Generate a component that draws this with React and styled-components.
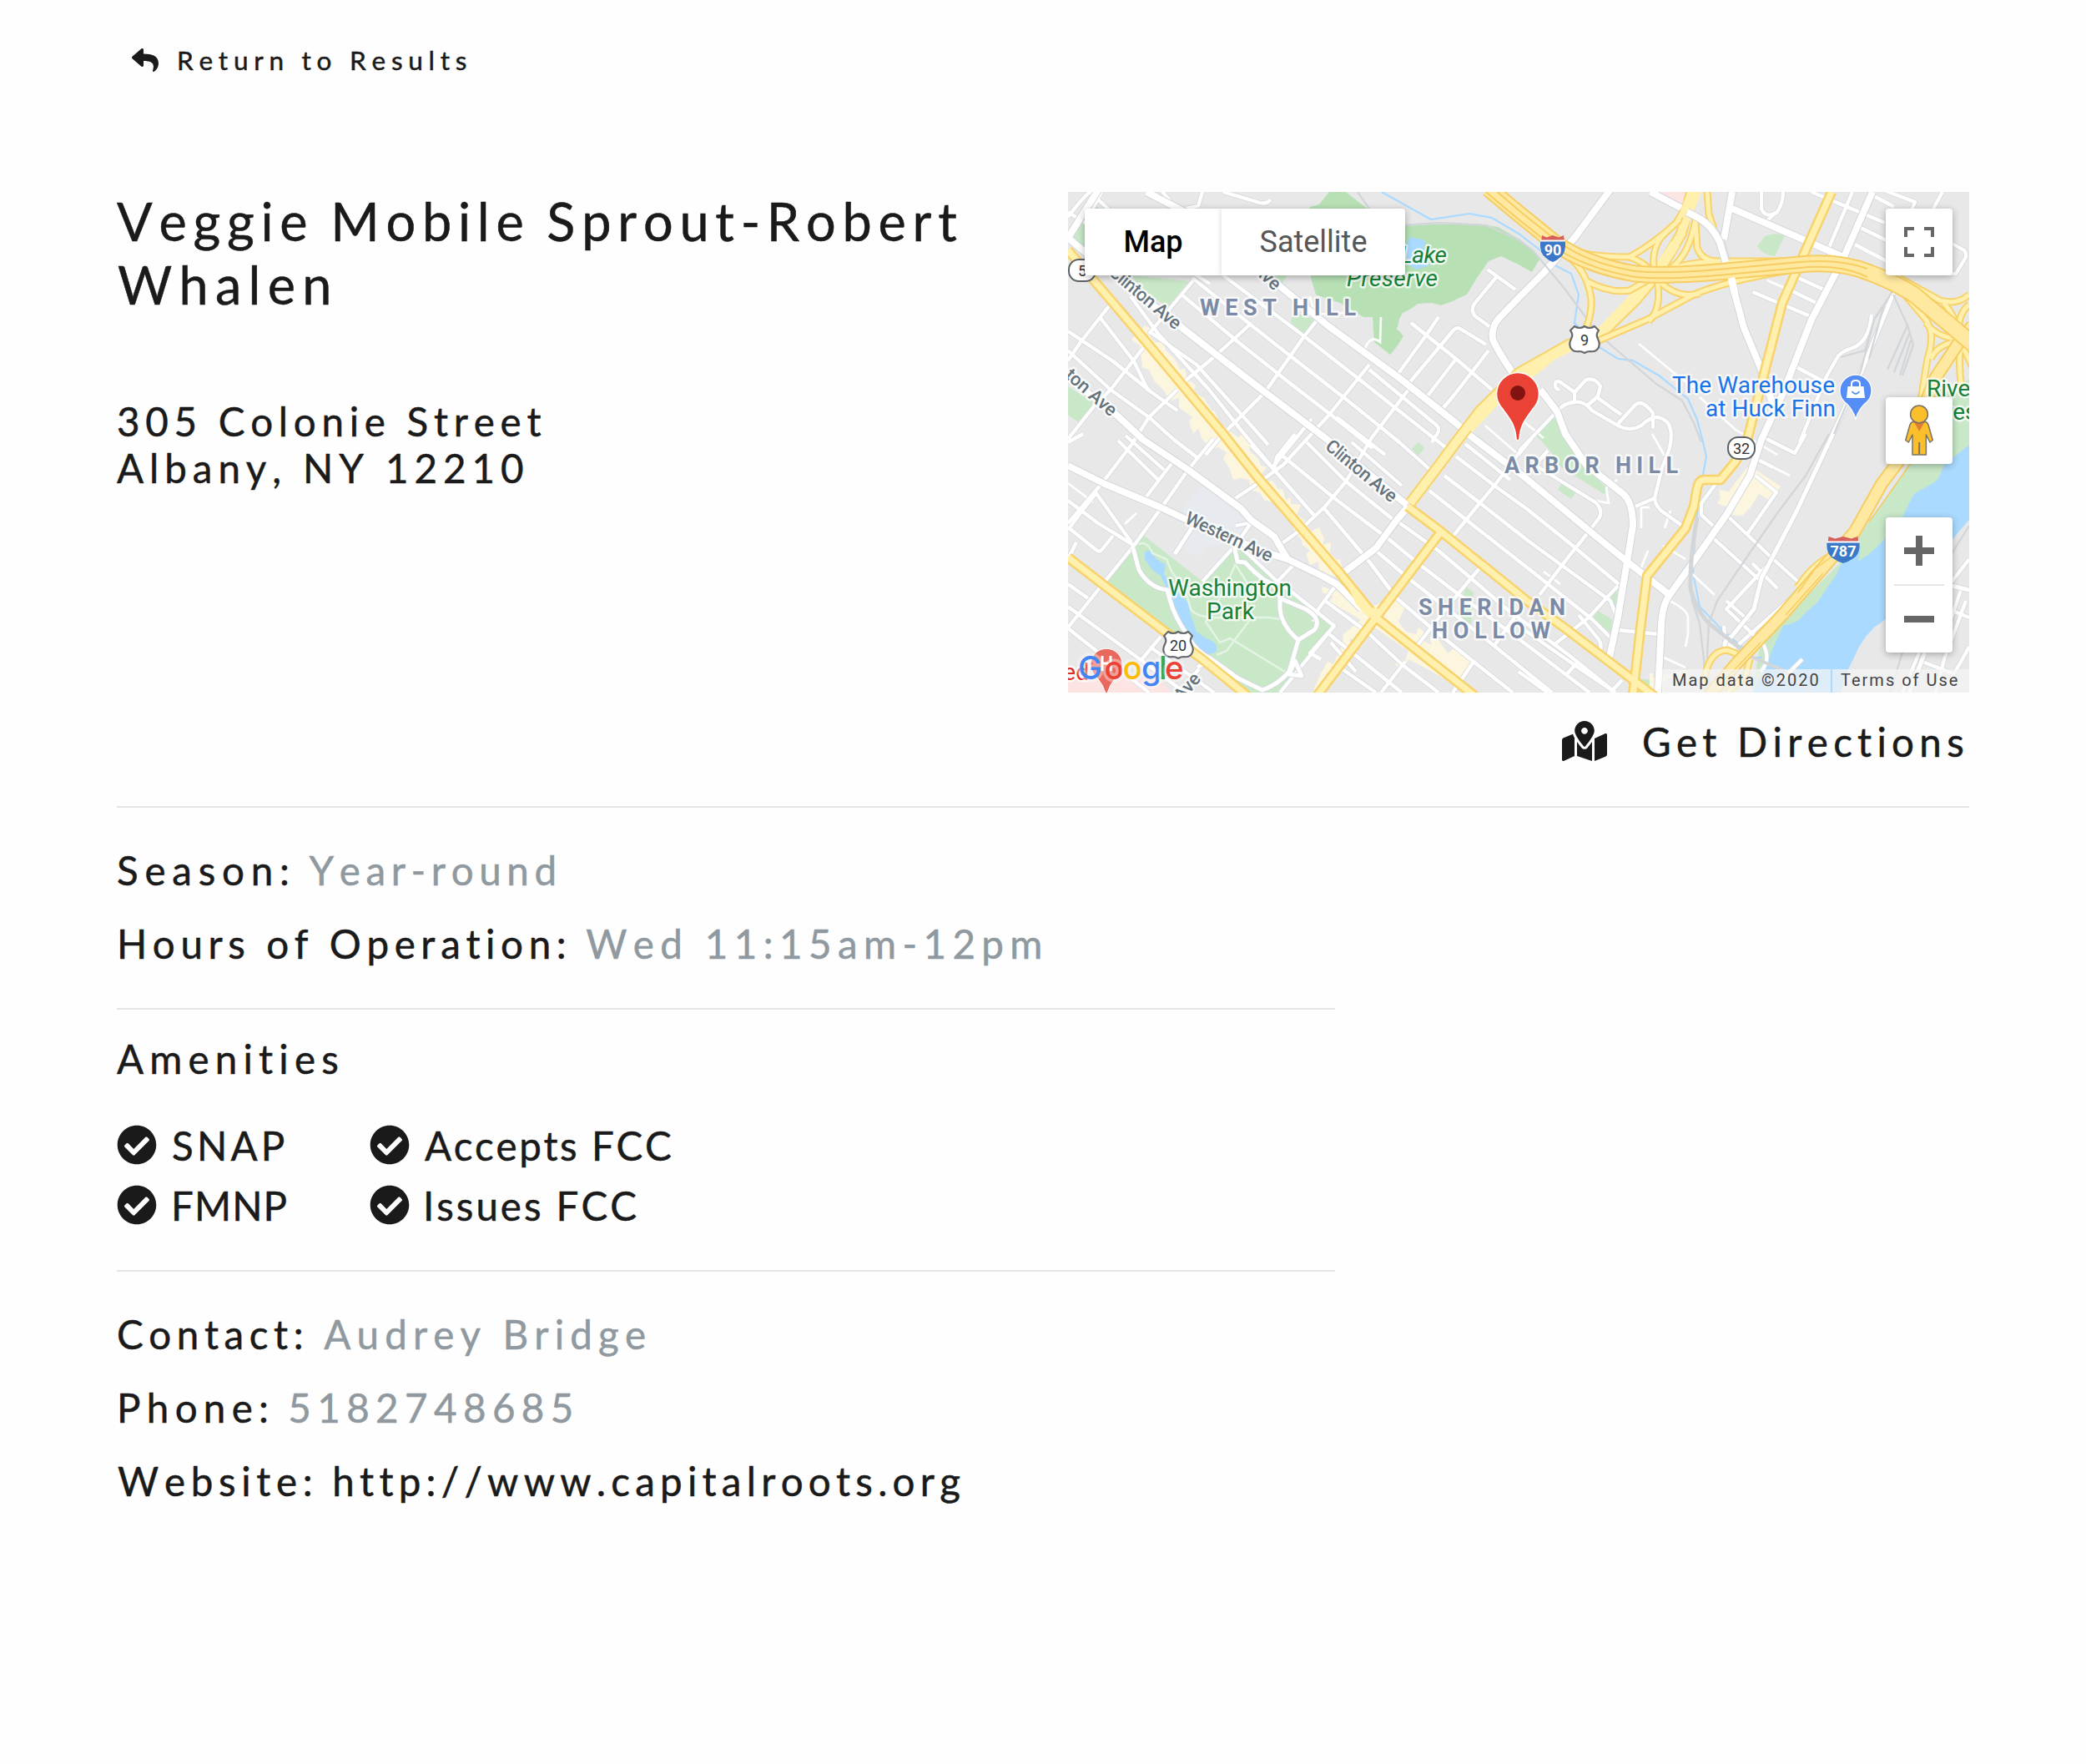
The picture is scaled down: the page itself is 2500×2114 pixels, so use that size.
import React from "react";
import styled, { createGlobalStyle } from "styled-components";
import { FaReply, FaMapMarkedAlt, FaCheckCircle } from "react-icons/fa";

const GlobalStyle = createGlobalStyle`
  * { box-sizing: border-box; }
  body {
    margin: 0;
    background: #fefefe;
    color: #1a1a1a;
    font-family: Lato, "Open Sans", sans-serif;
    font-kerning: none;
  }
`;

const Page = styled.main`
  min-height: 2114px;
  padding: 52px 140px 0;
  background: #fefefe;
  -webkit-text-stroke: 0.5px;
`;

const ReturnLink = styled.a`
  display: flex;
  align-items: center;
  width: max-content;
  height: 40px;
  margin-left: 18px;
  gap: 22px;
  font-size: 31.5px;
  line-height: 40px;
  letter-spacing: 6.75px;
  svg { width: 32px; height: 32px; }
`;

const Overview = styled.section`
  display: flex;
  justify-content: space-between;
  margin-top: 134px;
`;

const Place = styled.div`
  display: flex;
  flex-direction: column;
  gap: 98px;
  padding-top: 1px;
`;

const Title = styled.h1`
  margin: 0;
  font-size: 63px;
  line-height: 76px;
  font-weight: 400;
`;

const Address = styled.address`
  font-style: normal;
  font-size: 47.5px;
  line-height: 56px;
`;

const Line = styled.span`
  display: block;
  white-space: nowrap;
  padding-left: ${(p) => p.$indent || 0}px;
  letter-spacing: ${(p) => p.$track}px;
  word-spacing: ${(p) => p.$word || 0}px;
`;

const MapColumn = styled.div`
  display: flex;
  flex-direction: column;
  align-items: flex-end;
  padding-top: 4px;
`;

const Directions = styled.a`
  display: flex;
  align-items: center;
  height: 56px;
  margin-top: 30px;
  gap: 42px;
  font-size: 47.5px;
  line-height: 56px;
  letter-spacing: 6.29px;
  white-space: nowrap;
  svg { width: 54px; height: 48px; }
`;

const DirectionsText = styled.span`
  padding-top: 1px;
`;

const Rule = styled.hr`
  width: ${(p) => (p.$short ? "1460px" : "100%")};
  height: 2px;
  margin: ${(p) => p.$top}px 0 ${(p) => p.$bottom}px;
  border: 0;
  background: #e5e5e5;
`;

const Facts = styled.dl`
  display: flex;
  flex-direction: column;
  gap: 32px;
  margin: 0;
`;

const Fact = styled.div`
  display: flex;
  padding-left: ${(p) => p.$indent || 0}px;
  gap: ${(p) => p.$gap}px;
  font-size: 47.5px;
  line-height: 56px;
  white-space: nowrap;
`;

const Term = styled.dt`
  letter-spacing: ${(p) => p.$track}px;
`;

const Value = styled.dd`
  margin: 0;
  color: ${(p) => (p.$link ? "#1a1a1a" : "#8f999f")};
  letter-spacing: ${(p) => p.$track}px;
`;

const Heading = styled.h2`
  margin: 0;
  font-size: 47.5px;
  line-height: 56px;
  font-weight: 400;
  letter-spacing: 7.18px;
`;

const Amenities = styled.ul`
  display: grid;
  grid-template-columns: 303px max-content;
  grid-auto-rows: 72px;
  margin: 39px 0 0;
  padding: 0;
  list-style: none;
`;

const Amenity = styled.li`
  display: flex;
  align-items: center;
  gap: ${(p) => p.$gap}px;
  font-size: 47.5px;
  line-height: 72px;
  letter-spacing: ${(p) => p.$track}px;
  svg { width: 48px; height: 48px; }
`;

const AmenityName = styled.span`
  padding-top: 2px;
`;

/* ---------- map widget ---------- */

const MapFrame = styled.div`
  position: relative;
  width: 1080px;
  height: 600px;
  overflow: hidden;
  background: #e8e8e8;
  font-family: Roboto, sans-serif;
  font-kerning: normal;
  -webkit-text-stroke: 0;
`;

const MapArt = styled.svg`
  display: block;
  width: 1080px;
  height: 600px;
  font-family: Roboto, sans-serif;
`;

const Overlay = styled.div`
  position: absolute;
  inset: 0;
  display: flex;
  justify-content: space-between;
`;

const TypeSwitch = styled.div`
  display: flex;
  height: 80px;
  margin: 20px;
  border-radius: 4px;
  box-shadow: 0 2px 8px rgba(0, 0, 0, 0.3);
`;

const TypeButton = styled.button`
  width: ${(p) => (p.$active ? 164 : 220)}px;
  padding: 0;
  border: 0;
  border-radius: ${(p) => (p.$active ? "4px 0 0 4px" : "0 4px 4px 0")};
  background: #fff;
  box-shadow: ${(p) => (p.$active ? "none" : "-1px 0 6px rgba(0,0,0,.13)")};
  clip-path: ${(p) => (p.$active ? "none" : "inset(0 0 0 -8px)")};
  color: ${(p) => (p.$active ? "#000" : "#565656")};
  font: ${(p) => (p.$active ? 500 : 400)} 36px/80px Roboto, sans-serif;
`;

const Controls = styled.div`
  display: flex;
  flex-direction: column;
  width: 80px;
  margin: 20px;
`;

const ControlBox = styled.button`
  display: flex;
  align-items: center;
  justify-content: center;
  width: 80px;
  height: 80px;
  margin: 0 0 ${(p) => p.$after}px;
  padding: 0;
  border: 0;
  border-radius: 4px;
  background: #fff;
  box-shadow: 0 2px 8px rgba(0, 0, 0, 0.3);
`;

const ZoomBox = styled.div`
  display: flex;
  flex-direction: column;
  align-items: center;
  width: 80px;
  height: 162px;
  border-radius: 4px;
  background: #fff;
  box-shadow: 0 2px 8px rgba(0, 0, 0, 0.3);
`;

const ZoomButton = styled.button`
  display: flex;
  align-items: center;
  justify-content: center;
  width: 80px;
  height: 80px;
  padding: 0;
  border: 0;
  background: transparent;
`;

const ZoomLine = styled.div`
  width: 60px;
  height: 2px;
  background: #e6e6e6;
`;

const Credits = styled.div`
  position: absolute;
  right: 0;
  bottom: 0;
  display: flex;
  gap: 2px;
  height: 28px;
`;

const Credit = styled.span`
  width: ${(p) => p.$width}px;
  padding-left: ${(p) => p.$pad}px;
  background: rgba(245, 245, 245, 0.7);
  color: #444;
  font-size: 20px;
  line-height: 27px;
  letter-spacing: ${(p) => p.$track}px;
  white-space: nowrap;
`;

const parks = [
  "M290 18L301 15 313 0H333L361 22 383 38 404 41 436 39 490 38 515 42 540 56 566 79 556 96 540 87 519 77 504 83 490 103 478 123 458 132 447 136 436 133 419 134 411 140 401 145 397 152 395 162 393 164 398 168 402 173 395 184 386 195 367 180 365 150H354L326 133 310 128 297 123 291 103Z",
];

const greens = [
  "M29 15L42 22 20 70 4 53Z",
  "M76 100L145 107 119 138 86 115Z",
  "M242 100H263L252 116Z",
  "M270 143L295 153 283 170 267 157Z",
  "M0 233L31 253 15 278 0 267Z",
  "M90 411L161 467 201 423 317 518 290 553 254 600H213L176 567 147 547 111 523 44 468 78 427Z",
  "M420 300L427 307 420 316 412 308Z",
  "M477 473L486 480 483 520 465 510Z",
  "M582 270L561 292 576 308 591 330 615 345 642 362 648 357 625 335 603 305Z",
  "M593 347L610 358 603 368 587 357Z",
  "M659 472L656 500 643 488Z",
  "M635 502L652 512 650 528 628 512Z",
  "M835 53Q846 48 859 52L847 77Q832 75 826 65Z",
  "M683 583L702 585V600H670Z",
  "M1080 225L1036 240 1007 327 925 445 830 540 820 600H850L960 450 1080 303Z",
];

const waters = [
  "M1080 303L1050 327 1046 337 1042 345 1035 350 1014 362 1007 375 1000 390 978 417 960 434 947 443 950 424 926 447 920 460 908 477 898 492 885 503 876 513 868 517 857 520 842 553 835 573 820 600H926L931 580 940 562 947 547 956 533 966 522 980 512 1010 477 1059 417 1080 393Z",
  "M92 432Q95 428 99 431L106 440 117 447 115 458 124 473 136 483 144 493 147 507 154 527 165 535Q180 539 178 550 174 555 165 553L152 543 140 523 129 503 122 483 111 460 101 453 92 440Z",
  "M403 67L410 54 428 58 426 66 433 88 418 93 407 87Z",
];

const shops = [
  "M92 160L101 165 98 174 106 181 113 178 117 190 128 200 134 213 140 212 143 224 153 232 150 240 163 247 172 262 176 263 182 279 186 280 198 290 204 294 209 290 219 303 217 310 228 320 231 328 238 330 230 340 240 347 245 346 252 357 257 356 261 369 267 366 267 374 279 375 274 387 286 395 290 407 301 402 307 415 305 423 315 420 314 433 322 441 326 440 330 455 329 462 317 460 301 453 300 443 290 447 285 434 290 430 281 423 279 415 272 410 268 395 255 385 250 372 236 370 230 361 219 357 217 345 206 343 198 345 193 330 186 320 190 312 180 306 174 308 161 297 156 283 150 290 145 276 149 270 133 258 133 247 122 250 115 238 104 227 97 213 89 210 88 197 83 193 86 184 76 177Z",
  "M329 460L347 477 347 490 357 490 358 499 374 493 374 499 386 487 401 495 404 497 396 515 405 527 417 530 420 522 427 527 424 537 436 543 433 533 444 537 455 553 461 548 470 550 485 563 472 580 465 592 433 573 408 560 401 573 392 567 395 560 404 562 408 550 369 523 351 523 347 537 338 535 340 557 329 560 325 575 311 590 294 597 303 577 311 563 318 566 329 543 330 530 351 513 335 503 313 491 318 485 305 480 304 473 313 476 330 480Z",
  "M814 330L824 333 854 353 849 360 842 370 835 366 828 362 818 378 808 388 795 387 800 380 785 376 778 373 782 367 780 357 792 359 797 352Z",
  "M740 573L744 583H720L712 590 714 600H697V577H701V582Z",
];

const minorStreets = [
  "M151 105L97 170", "M149 103L220 160 267 197 344 257 397 300 433 332",
  "M186 100L283 173 347 223 390 257 460 312", "M136 123L204 180 267 230 315 267 365 307",
  "M220 157L176 197 136 230", "M304 147L283 173 236 240 186 290 165 315",
  "M361 207L313 267 258 327 222 353 201 367", "M408 237L365 293 333 347 308 377 276 407 254 423",
  "M444 150L429 172 394 220", "M408 230L460 168Q465 161 470 164L501 183", "M504 190L463 243 447 262",
  "M411 157L465 200 508 237", "M465 200L429 247", "M503 93L536 117", "M515 100L487 134Q482 142 488 149L506 162",
  "M361 213L441 279Q446 283 443 289L436 300",
  "M0 167L54 203 100 240 131 262", "M0 190L51 237 97 270 127 297 157 320", "M49 137L15 180 0 202",
  "M90 187L51 237 31 257 0 296", "M131 237L97 270 76 303 40 350 0 397", "M38 150L79 203 96 238",
  "M75 125L108 170 169 237 211 290 247 333 297 390", "M97 167L154 207 208 267 240 303",
  "M62 137L110 195 186 285 216 330", "M69 292L115 333", "M60 298L108 345",
  "M0 30Q15 10 26 0", "M26 0L75 45 100 66 170 110", "M0 24L25 40", "M161 0L156 17 140 20",
  "M186 0L230 13Q240 15 242 9", "M40 0L26 27", "M110 -4L130 20",
  "M174 296L144 333 113 377 78 425 44 467 0 522", "M126 323L94 365", "M0 370L36 397 78 423",
  "M33 360L76 420", "M0 402L35 430Q39 432 42 427L54 412", "M0 405L17 382 33 362", "M0 300L18 290",
  "M78 423L54 408", "M201 400L216 397M201 423L219 397",
  "M0 470L24 487", "M0 497L86 560 140 600", "M0 523L97 600", "M111 533L86 563", "M161 567L133 600",
  "M98 545L175 600", "M0 440L10 420",
  "M204 423L251 467 269 480 319 520 254 600", "M161 467L201 423", "M272 445L248 470",
  "M219 303L247 333 250 318 272 290", "M245 330L292 272",
  "M258 317L319 367 380 413", "M306 378L360 442 394 487", "M286 300L333 347 390 393",
  "M340 300L400 352", "M322 270L380 315",
  "M395 395L444 430 483 463 526 500 600 555 656 600", "M383 415L422 447 465 480 550 543 625 600",
  "M369 430L408 463 497 533 580 600", "M361 443L394 487 436 523 486 563 533 600",
  "M308 490L358 527 401 567 444 600", "M313 530L369 575 400 600", "M326 570L369 600", "M315 540L345 575",
  "M322 470L300 500 294 515", "M319 520L290 553 303 560",
  "M494 450L458 493 419 543", "M404 563L375 600", "M486 563L461 600", "M540 503L510 545",
  "M433 358L490 403 550 450 628 512 656 540", "M451 340L494 373 550 417 650 490 656 505",
  "M465 317L511 352 550 380 600 420 660 470", "M476 302L530 345",
  "M550 300L511 352 490 377 461 413", "M575 310L545 345", "M624 407L600 437 565 483", "M659 472L624 510 582 543",
  "M556 325L632 372Q641 380 637 390L624 407 610 425", "M540 315L556 295",
  "M659 525L708 530", "M612 507L635 535Q641 542 637 552", "M540 520L607 567 656 600", "M612 562L596 580",
  "M664 585L650 600", "M540 575L575 600",
  "M541 310L586 263Q596 252 607 252 618 250 628 262L659 280Q673 288 687 280 705 262 719 277 726 288 720 310L712 330 703 367 680 377",
  "M703 367Q704 378 715 385L736 400", "M607 252V240L621 225Q632 222 638 233L635 245 621 257",
  "M659 278L680 255Q688 248 701 265V283", "M635 247L663 267", "M607 240L593 230",
  "M593 230C580 220 583 240 589 236",
  "M891 0L979 37", "M831 0V20Q836 32 849 25 857 15 857 0", "M849 24L836 36", "M940 0L912 67",
  "M950 43L985 60", "M943 63L985 85", "M966 5L990 18", "M978 -2L1015 12 1004 40", "M1048 0L1037 20",
  "M1060 62L1074 70Q1078 75 1075 80L1064 98 1055 98",
  "M875 103L908 118", "M866 118L901 135", "M821 120L892 150",
  "M963 147Q960 180 940 187 924 192 921 200L908 223 877 300", "M873 210L905 227",
  "M835 295L871 313 884 290", "M789 387L845 440 876 468Q879 474 874 480L803 543",
  "M771 413L831 467", "M824 340L849 360 814 410", "M776 350L759 373V387L773 400", "M845 440L789 500 824 533",
  "M789 490L815 513 820 503", "M820 445L850 475", "M786 520L788 540 800 548",
  "M832 540Q844 560 830 575", "M821 318L845 330", "M850 590L880 560",
  "M1059 467L1080 440", "M1080 510L1040 494", "M1070 477L1050 535", "M1024 563L1060 577",
  "M1076 490L1050 560 1040 600", "M1020 552L1000 600", "M1080 545L1055 590",
];

const thinLanes = [
  "M684 182L730 220 753 236", "M757 246L800 285 850 315", "M838 106L866 118", "M700 290L723 330",
  "M747 457L775 483", "M712 557L740 570", "M715 487Q743 500 743 510V530L740 545", "M792 303L865 340",
  "M687 375V403M687 378L697 378", "M658 345L645 355 648 373 632 370", "M715 403L722 382", "M500 280L540 315",
  "M290 125L295 147 330 145M355 190Q362 170 374 180L375 150", "M0 349L30 372M68 398L82 385",
  "M540 270L570 295", "M683 460L695 430", "M713 424L740 440", "M570 455L590 470",
];

const collectors = [
  "M0 55L26 77 133 160 188 203 236 240 311 297 406 375",
  "M94 0L140 24 226 90 254 113 311 160 397 223 465 277 483 293 545 340 621 403 670 443 721 483",
  "M0 223L58 267 90 297 144 333 208 380 219 393 247 413 263 440",
  "M0 328L44 350 111 378 151 397 240 433 263 440 304 460 322 470 352 500",
  "M650 -3L607 55 570 97 540 127 515 153Q507 163 509 177 515 190 525 205L533 217",
  "M566 237L586 263 596 290 621 327 663 360Q677 370 677 400L670 443 659 510 647 567",
  "M698 0L736 20 757 33Q774 42 783 62L794 103 810 163 835 223 845 257",
  "M796 0L786 57",
  "M964 0L929 80 891 153 856 243 831 297 817 340 789 387 754 437 721 483Q712 495 711 520L707 600",
  "M796 20L929 78",
  "M329 457L369 427 394 393 408 377",
  "M36 -2L0 55",
];

const localRoads = [
  "M996 105L950 217 912 300 873 383 831 463 822 500 795 533Q782 540 790 550",
  "M78 427L85 453Q98 475 119 477 124 500 134 517L144 533Q152 550 172 560L204 583 233 597Q252 590 265 575L276 537Q256 520 254 500V487Q250 470 235 465 222 455 212 444L203 443 199 423",
  "M254 487L285 500Q305 512 295 525L276 537", "M272 562L265 578 280 580Z",
  "M1059 472L1080 477", "M1027 552L1008 600", "M128 434L152 397", "M155 570L170 560",
];

const arterials = [
  "M0 70L54 133 94 180 186 290 228 343 326 457 369 510",
  "M369 510L419 550 490 606",
  "M299 603L369 510 447 407",
  "M407 377L447 407 550 490 596 523 680 587 705 606",
  "M0 438L44 472 111 523 161 560 215 604",
  "M915 0L887 63 856 133 838 203 814 297 800 323 782 345H762Q755 345 753 360L750 377 740 403 694 460 686 523 677 604",
];

const ramps = [
  "M596 67Q620 78 673 78 702 62 729 37L738 22",
  "M673 78Q692 85 701 97", "M703 95Q698 70 712 53L733 33", "M722 92Q745 75 752 33",
  "M766 0L768 27 774 44", "M752 37L754 67Q760 83 778 83H856", "M719 95Q735 85 778 83",
  "M600 78Q622 95 627 128 628 145 621 163", "M622 107Q650 122 673 118L696 105",
  "M706 105Q712 140 696 155", "M636 178L694 153 750 123Q790 106 870 93", "M710 108Q730 128 757 122",
  "M996 103L1045 130Q1066 136 1080 123", "M997 116L1028 153Q1040 170 1030 200L1022 250",
  "M1028 157Q1045 178 1076 176", "M1080 135Q1064 148 1068 178", "M1049 133Q1062 145 1068 172",
  "M1034 200Q1042 182 1068 179", "M1071 180Q1066 200 1071 236", "M1072 184L1084 210",
  "M762 590Q766 550 790 549L805 555", "M874 474Q890 450 910 438", "M817 560L812 580 790 600",
];

const freeway = [
  "M504 -4L540 26 582 60Q620 88 680 98 720 102 800 94L877 87Q925 82 961 97 990 108 1014 123L1084 182",
];
const freewaySouth = [
  "M1084 160L1070 177 1040 222 1005 310 975 350 943 407 908 447 856 507 803 563 768 604",
];
const route9 = [
  "M410 373L445 327 465 300 494 262 540 217 600 183 642 167 680 130 706 99 735 50 748 -4",
];

function Roads({ paths, fill, casing, width, edge }) {
  return (
    <g fill="none" strokeLinejoin="round">
      {paths.map((d, i) => <path key={"c" + i} d={d} stroke={casing} strokeWidth={width + edge} />)}
      {paths.map((d, i) => <path key={"f" + i} d={d} stroke={fill} strokeWidth={width} />)}
    </g>
  );
}

function Label({ x, y, children, length, size = 28, fill, weight = 400, italic, anchor = "start", rotate = 0 }) {
  return (
    <text
      transform={`translate(${x} ${y}) rotate(${rotate})`}
      fontSize={size} fontWeight={weight} fontStyle={italic ? "italic" : "normal"}
      textAnchor={anchor} textLength={length} fill={fill}
      stroke="#fff" strokeOpacity="0.75" strokeWidth="5" strokeLinejoin="round" paintOrder="stroke"
    >
      {children}
    </text>
  );
}

function Interstate({ x, y, w, children }) {
  const h = w / 2;
  return (
    <g transform={`translate(${x} ${y})`}>
      <path d={`M${-h + 1} -8L${-h + 2} -16 ${-h / 2} -13.5 0 -16 ${h / 2} -13.5 ${h - 2} -16 ${h - 1} -8Z`} fill="#d8605c" />
      <path d={`M${-h} -9H${h}Q${h + 1} 6 ${h * 0.55} 11 ${h * 0.25} 15 0 16 ${-h * 0.25} 15 ${-h * 0.55} 11 ${-h - 1} 6 ${-h} -9Z`} fill="#3b78c8" />
      <path d={`M${-h} -9.5H${h}`} stroke="#fff" strokeWidth="2" />
      <text y="8" textAnchor="middle" fontSize="18" fontWeight="700" fill="#fff">{children}</text>
    </g>
  );
}

function UsRoute({ x, y, children }) {
  return (
    <g transform={`translate(${x} ${y})`}>
      <path
        d="M-12 -16Q-6 -12 0 -16 6 -12 12 -16L17 -11Q13 -6 16 -1 20 7 15 12 12 15 7 14 3 14 0 16 -3 14 -7 14 -12 15 -15 12 -20 7 -16 -1 -13 -6 -17 -11Z"
        fill="#fff" stroke="#65696d" strokeWidth="2.2" strokeLinejoin="round"
      />
      <text y="7" textAnchor="middle" fontSize="18" fill="#333">{children}</text>
    </g>
  );
}

function StateRoute({ x, y, children }) {
  return (
    <g transform={`translate(${x} ${y})`}>
      <rect x="-16" y="-13" width="32" height="26" rx="12" fill="#fff" stroke="#5f6368" strokeWidth="2" />
      <text y="6.5" textAnchor="middle" fontSize="18" fill="#333">{children}</text>
    </g>
  );
}

function Pegman() {
  return (
    <svg width="36" height="62" viewBox="-1 0 36 62" fill="#fbbf2b" stroke="#7a7263" strokeWidth="1.5" strokeLinejoin="round">
      <path d="M9.500 20.500H24.500Q27 21 28 24L33.300 42.500 30 45 25.400 36V60H9V36L4.300 45 0.800 42.500 6 24Q7 21 9.500 20.500Z" />
      <path d="M17.200 45V59.500" strokeWidth="2" />
      <path d="M11 21H23.500L17.200 32Z" fill="#e07f33" stroke="none" />
      <circle cx="17" cy="11.500" r="10.400" />
    </svg>
  );
}

function StreetMap() {
  const town = "#7b8ba6";
  const street = "#65737c";
  const park = "#188038";
  const shop = "#1a73e8";
  const logo = [
    { letter: "G", x: 12, fill: "#4285f4" },
    { letter: "o", x: 43.5, fill: "#ea4335" },
    { letter: "o", x: 65.500, fill: "#fbbc05" },
    { letter: "g", x: 88, fill: "#4285f4" },
    { letter: "l", x: 109, fill: "#34a853" },
    { letter: "e", x: 116, fill: "#ea4335" },
  ];
  return (
    <MapArt viewBox="0 0 1080 600">
      <rect width="1080" height="600" fill="#e8e8e8" />
      <path d="M160 352L217 397 201 420 167 425 155 437 140 430 140 423 154 403 140 393 138 378Z" fill="#e7ebef" />
      <path d="M700 0H742L738 14ZM0 583H108L124 600H0Z" fill="#fce4e3" />
      {greens.map((d) => <path key={d} d={d} fill="#c8e8c8" />)}
      {parks.map((d) => <path key={d} d={d} fill="#b7e1b5" />)}
      {shops.map((d) => <path key={d} d={d} fill="#fdf6de" />)}
      {waters.map((d) => <path key={d} d={d} fill="#aadaff" />)}
      <g fill="none" stroke="#aadaff" strokeWidth="2.200">
        <path d="M376 0L435 33 481 26 508 31 540 50 566 70 582 87 603 98 612 123 607 157 638 187 659 200 677 202 708 220 743 248 754 273 761 300 765 317 759 350 752 400 749 457 757 497 786 527 810 547 820 558 832 558" />
      </g>
      <g fill="none" stroke="#fff" strokeOpacity=".5" strokeWidth="2.500">
        <path d="M81 423Q95 416 101 433L118 440 124 455 140 475 147 500Q155 512 190 510L240 510 254 512M201 445L188 475 172 505 165 515 182 540 194 535 260 575M220 510L205 530 190 550 178 555M201 447L222 480" />
      </g>
      <g fill="none" stroke="#fff" strokeWidth="2.600">
        {thinLanes.map((d) => <path key={d} d={d} />)}
      </g>
      <Roads paths={minorStreets} fill="#fff" casing="#d6d8dd" width={4.3} edge={1.6} />
      <Roads paths={localRoads} fill="#fff" casing="#d6d8dd" width={5} edge={1.8} />
      <Roads paths={collectors} fill="#fff" casing="#d3d5dc" width={8} edge={2} />
      <g fill="none" stroke="#d2d6d9" strokeWidth="2.300">
        <path d="M347 0L361 20 383 36 404 40 444 37 501 40 540 57 557 70 596 117 635 170 705 230 736 250 750 277 759 300" />
        <path d="M912 290L884 340 850 385 814 437 778 490 768 517 766 557 770 600M747 487L757 517 762 560 764 600" />
        <path d="M989 118L966 153 955 190 926 198M966 153L950 215 918 290M978 135L960 200M989 123L1006 160 1013 183 1000 220M1006 160L982 213M1008 170L990 216M1010 178L997 220M1040 20L1030 45M1080 400L1055 440M1000 552L985 600" />
      </g>
      <path d="M754 390Q745 440 746 475 752 500 768 517L807 548" fill="none" stroke="#d2d6d9" strokeWidth="5" />
      <path d="M819 557L856 573 890 598" fill="none" stroke="#d2d6d9" strokeWidth="4" />
      <Roads paths={arterials} fill="#fff0ad" casing="#f8d26a" width={7.5} edge={5} />
      <Roads paths={route9} fill="#fff0ad" casing="#f8d26a" width={10} edge={4} />
      <path d="M480 284L510 252 580 196 642 165 700 104 728 62" fill="none" stroke="#fff0ad" strokeWidth="12" />
      <path d="M331 462L345 480 352 492 363 498 379 500 368 514 357 507 345 494Z" fill="#fff0ad" />
      <Roads paths={ramps} fill="#fff0ad" casing="#f8d26a" width={5} edge={4} />
      <Roads paths={freewaySouth} fill="#ffe9a0" casing="#f6cd62" width={12} edge={4} />
      <path d="M1010 325L975 375 960 395M905 457L860 507M875 480L895 452 925 430M830 540L780 592" fill="none" stroke="#f6cd62" strokeWidth="1.500" />
      <Roads paths={freeway} fill="#ffe9a0" casing="#f6cd62" width={17} edge={4} />
      <g fill="none" stroke="#f6cd62" strokeWidth="2">
        <path d="M504 -9L545 26 584 57Q620 85 680 95 720 99 800 91L877 84Q925 80 958 92" />
        <path d="M496 -4L540 33 578 63Q620 92 680 102 720 106 800 98L877 91Q925 86 958 102" />
      </g>
      <path d="M735 30L748 -4M738 44L757 -4" fill="none" stroke="#fff0ad" strokeWidth="7" />
      <Roads paths={["M742 24L757 32Q772 41 781 60L788 84"]} fill="#fff" casing="#d3d5dc" width={8} edge={2} />
      <path d="M795 103L799 122" stroke="#fff" strokeWidth="8.500" />

      <Interstate x={581} y={68} w={30}>90</Interstate>
      <Interstate x={929} y={429} w={39}>787</Interstate>
      <UsRoute x={619} y={177}>9</UsRoute>
      <UsRoute x={132} y={543}>20</UsRoute>
      <StateRoute x={807} y={307}>32</StateRoute>
      <StateRoute x={17} y={94}>5</StateRoute>

      <Label x={88} y={132} rotate={40} size={22} length={105} fill={street} weight={500} anchor="middle">Clinton Ave</Label>
      <Label x={347} y={340} rotate={39.500} size={22} length={104} fill={street} weight={500} anchor="middle">Clinton Ave</Label>
      <Label x={190} y={420} rotate={24.900} size={22} length={113} fill={street} weight={500} anchor="middle">Western Ave</Label>
      <Label x={51} y={270} rotate={41} size={22} fill={street} weight={500} anchor="end">ton Ave</Label>
      <Label x={247} y={119} rotate={43} size={22} fill={street} weight={500} anchor="end">Ave</Label>
      <Label x={160} y={584} rotate={-50} size={22} fill={street} weight={500} anchor="end">Ave</Label>
      <Label x={158} y={148} size={27} length={187} fill={town} weight={700}>WEST HILL</Label>
      <Label x={523} y={337} size={27} length={208} fill={town} weight={700}>ARBOR HILL</Label>
      <Label x={420} y={507} size={27} length={176} fill={town} weight={700}>SHERIDAN</Label>
      <Label x={436} y={535} size={27} length={142} fill={town} weight={700}>HOLLOW</Label>
      <Label x={120} y={484} length={148} fill={park}>Washington</Label>
      <Label x={166} y={512} length={57} fill={park}>Park</Label>
      <Label x={454} y={85} length={56} fill={park} italic anchor="end">Lake</Label>
      <Label x={334} y={113} length={109} fill={park} italic>Preserve</Label>
      <Label x={724} y={241} length={195} fill={shop}>The Warehouse</Label>
      <Label x={764} y={269} length={156} fill={shop}>at Huck Finn</Label>
      <Label x={1029} y={245} fill={park}>Rive</Label>
      <Label x={1051} y={273} fill={park}>res</Label>
      <Label x={25} y={585} size={28} fill="#d93025" anchor="end">ed</Label>

      <path d="M944 272Q940 259 930 251A19 19 0 1 1 958 251Q948 259 944 272Z" fill="#548df5" stroke="#fff" strokeWidth="1.200" />
      <path d="M934.500 233H953.500L955 247H933Z" fill="#fff" />
      <path d="M939 234V230Q939 226 944 226 949 226 949 230V234" fill="none" stroke="#fff" strokeWidth="2" />
      <path d="M939.500 239Q944 245 948.500 239" fill="none" stroke="#548df5" strokeWidth="1.800" />

      <path d="M46 603Q42 590 34 581A19 19 0 1 1 58 581Q50 590 46 603Z" fill="#e9695f" stroke="#fff" strokeWidth="1" />
      <path d="M41 556V574M51 556V574M41 565H51" stroke="#fff" strokeWidth="3" />

      <path d="M537 296C536 279 529 271 520 259A25.500 25.500 0 1 1 558 259C549 271 542 279 541 296Q539 300 537 296Z" fill="#ea4335" stroke="#fff" strokeWidth="1.600" />
      <circle cx="539" cy="241" r="9" fill="#811411" />

      <text y="584" fontSize="38.5" fontFamily="Inter, sans-serif" fontWeight="500" stroke="#fff" strokeOpacity=".4" strokeWidth="7" strokeLinejoin="round" paintOrder="stroke">
        {logo.map((l) => <tspan key={l.x} x={l.x} fill={l.fill}>{l.letter}</tspan>)}
      </text>
    </MapArt>
  );
}

function MapWidget() {
  return (
    <MapFrame>
      <StreetMap />
      <Overlay>
        <TypeSwitch>
          <TypeButton $active>Map</TypeButton>
          <TypeButton>Satellite</TypeButton>
        </TypeSwitch>
        <Controls>
          <ControlBox $after={146} aria-label="Full screen">
            <svg width="36" height="36" viewBox="0 0 36 36" fill="none" stroke="#666" strokeWidth="4">
              <path d="M2 12V2H12M24 2H34V12M34 24V34H24M12 34H2V24" />
            </svg>
          </ControlBox>
          <ControlBox $after={64} aria-label="Street view"><Pegman /></ControlBox>
          <ZoomBox>
            <ZoomButton aria-label="Zoom in">
              <svg width="36" height="36" viewBox="0 0 36 36" fill="#666"><path d="M14 0H22V14H36V22H22V36H14V22H0V14H14Z" /></svg>
            </ZoomButton>
            <ZoomLine />
            <ZoomButton aria-label="Zoom out">
              <svg width="36" height="8" viewBox="0 0 36 8" fill="#666"><path d="M0 0H36V8H0Z" /></svg>
            </ZoomButton>
          </ZoomBox>
        </Controls>
      </Overlay>
      <Credits>
        <Credit $width={202} $pad={12} $track={2}>Map data ©2020</Credit>
        <Credit $width={164} $pad={10} $track={2}>Terms of Use</Credit>
      </Credits>
    </MapFrame>
  );
}

const schedule = [
  { term: "Season:", value: "Year-round", tracks: [7.75, 6.6], gap: 16 },
  { term: "Hours of Operation:", value: "Wed 11:15am-12pm", tracks: [6.6, 7.4], gap: 17 },
];

const contacts = [
  { term: "Contact:", value: "Audrey Bridge", tracks: [6.6, 7.15], gap: 18 },
  { term: "Phone:", value: "5182748685", tracks: [7.3, 7.4], gap: 16 },
  { term: "Website:", value: "http://www.capitalroots.org", tracks: [6.69, 6.25], gap: 17, indent: 1 },
];

const amenities = [
  { name: "SNAP", track: 4.2, gap: 18 },
  { name: "Accepts FCC", track: 2.64, gap: 18 },
  { name: "FMNP", track: 1.09, gap: 17 },
  { name: "Issues FCC", track: 2.98, gap: 16 },
];

function FactList({ items }) {
  return (
    <Facts>
      {items.map((f) => (
        <Fact key={f.term} $gap={f.gap} $indent={f.indent}>
          <Term $track={f.tracks[0]}>{f.term}</Term>
          <Value $track={f.tracks[1]} $link={f.term === "Website:"}>{f.value}</Value>
        </Fact>
      ))}
    </Facts>
  );
}

export default function App() {
  return (
    <>
      <GlobalStyle />
      <Page>
        <ReturnLink><FaReply />Return to Results</ReturnLink>
        <Overview>
          <Place>
            <Title>
              <Line $track={7.75} $word={-4}>Veggie Mobile Sprout-Robert</Line>
              <Line $track={8.3} $indent={1}>Whalen</Line>
            </Title>
            <Address>
              <Line $track={6.73}>305 Colonie Street</Line>
              <Line $track={6.95}>Albany, NY 12210</Line>
            </Address>
          </Place>
          <MapColumn>
            <MapWidget />
            <Directions><FaMapMarkedAlt /><DirectionsText>Get Directions</DirectionsText></Directions>
          </MapColumn>
        </Overview>
        <Rule $top={50} $bottom={47} />
        <FactList items={schedule} />
        <Rule $short $top={49} $bottom={31} />
        <Heading>Amenities</Heading>
        <Amenities>
          {amenities.map((a) => (
            <Amenity key={a.name} $gap={a.gap} $track={a.track}>
              <FaCheckCircle />
              <AmenityName>{a.name}</AmenityName>
            </Amenity>
          ))}
        </Amenities>
        <Rule $short $top={42} $bottom={47} />
        <FactList items={contacts} />
      </Page>
    </>
  );
}
